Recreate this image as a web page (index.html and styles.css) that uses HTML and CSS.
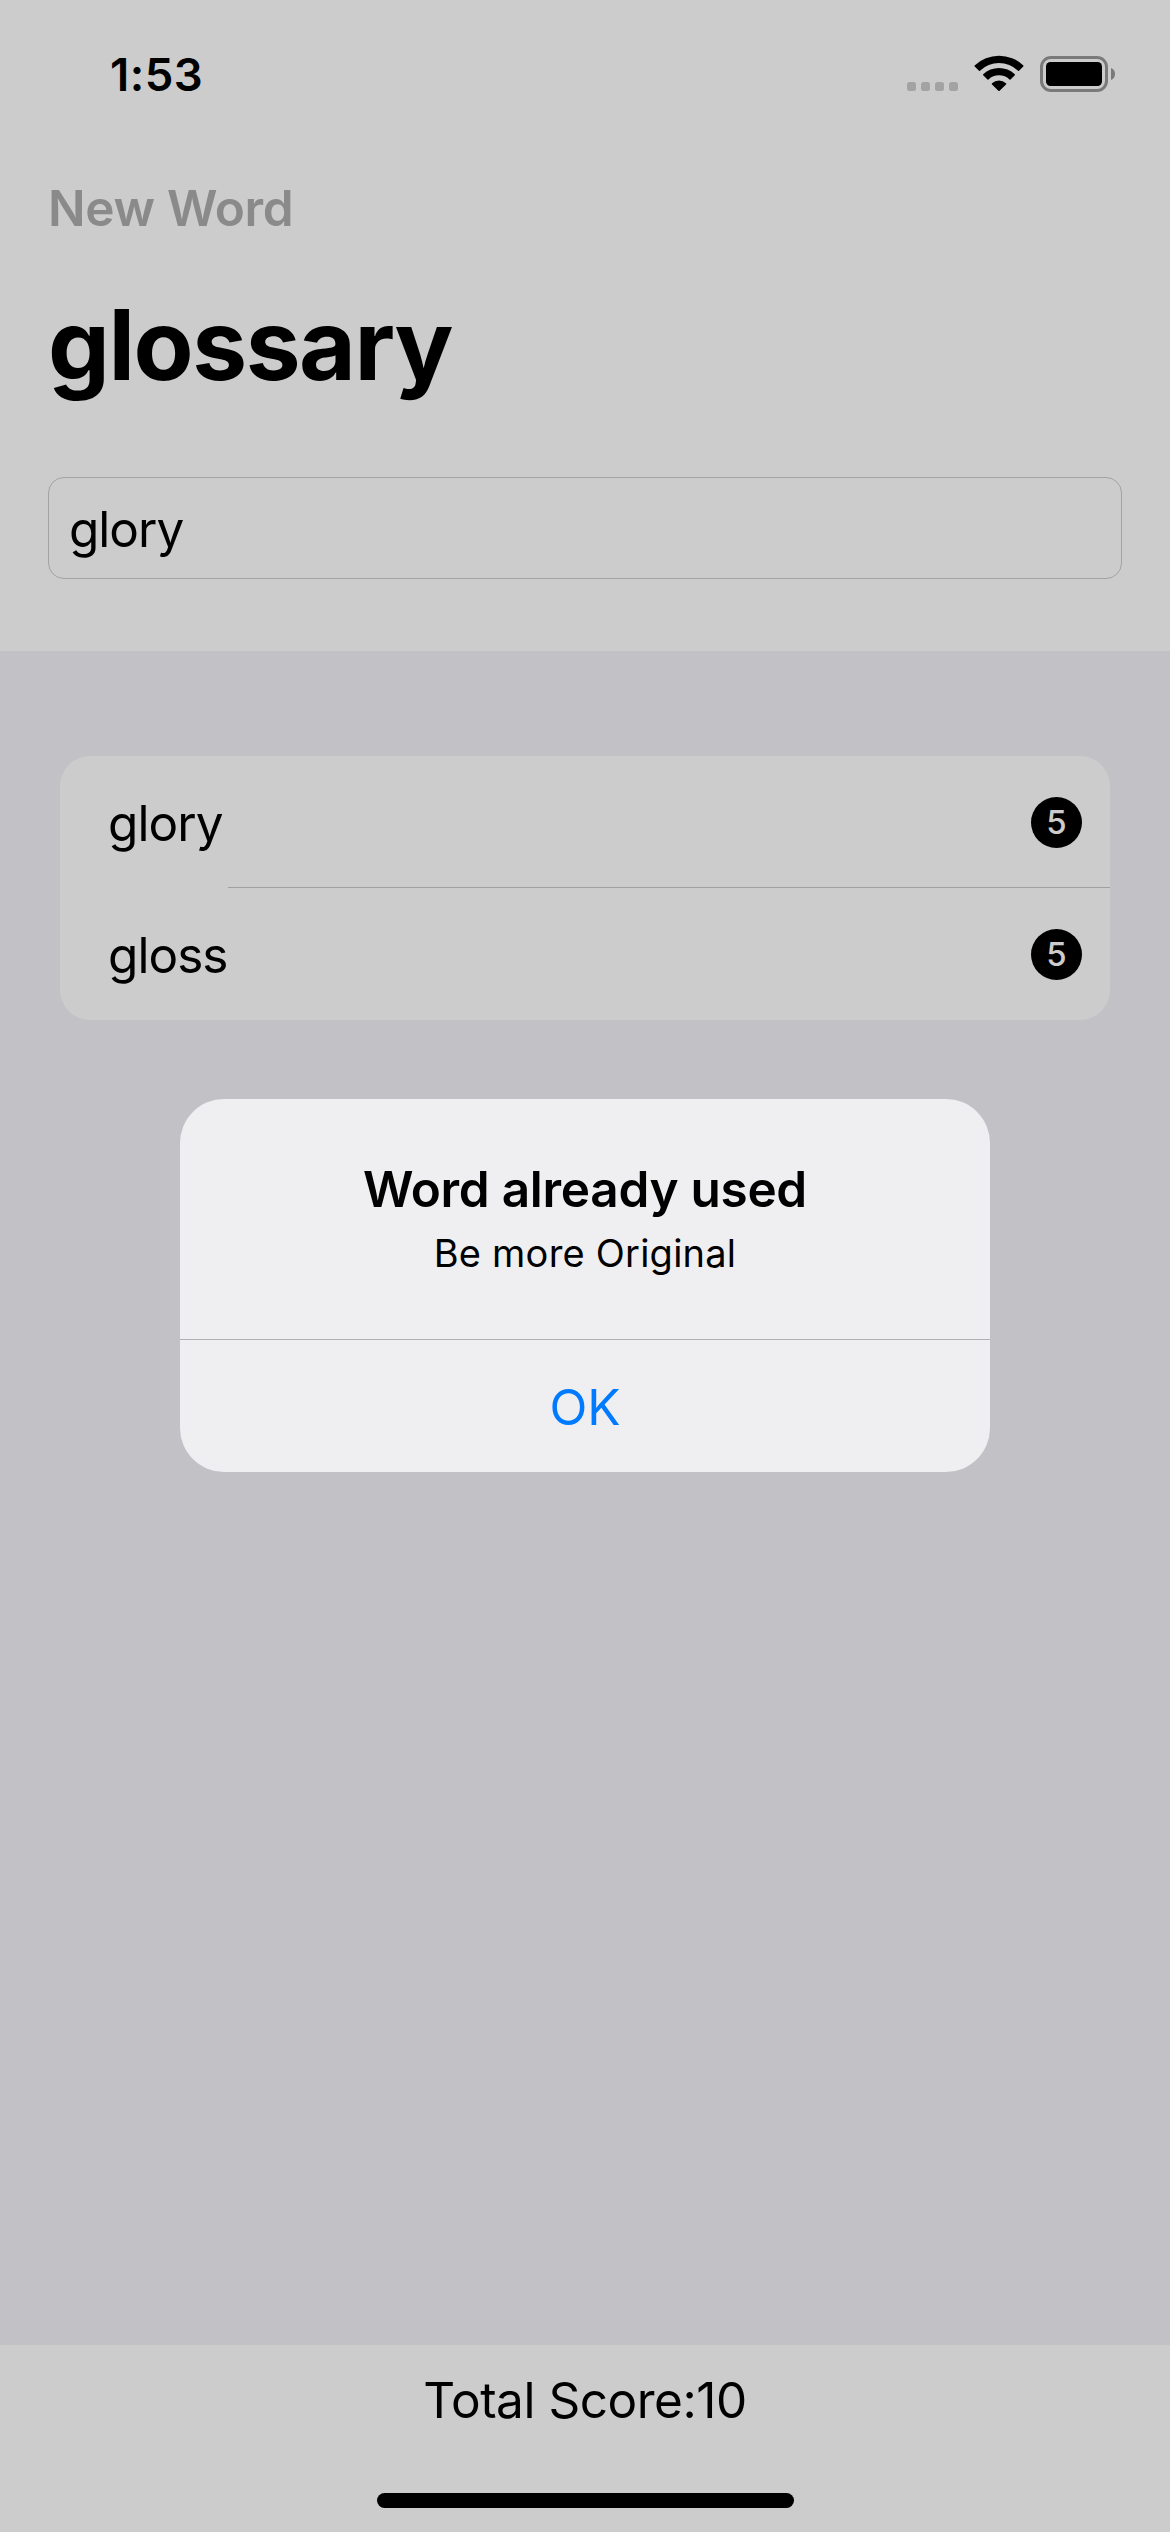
FILE: index.html
```html
<!DOCTYPE html>
<html lang="en">
<head>
<meta charset="utf-8">
<title>glossary</title>
<link rel="stylesheet" href="styles.css">
</head>
<body>
<div class="screen">
  <div class="status-bar">
    <span class="time">1:53</span>
    <div class="status-icons">
      <svg class="cellular" width="52" height="36" viewBox="0 0 52 36"><g fill="#a3a3a3"><rect x="0" y="27" width="9" height="9" rx="2.5"/><rect x="14" y="27" width="9" height="9" rx="2.5"/><rect x="28" y="27" width="9" height="9" rx="2.5"/><rect x="42" y="27" width="9" height="9" rx="2.5"/></g></svg>
      <svg class="wifi" width="50" height="37" viewBox="0 0 50 37"><path d="M.6 10.400A35.500 35.500 0 0 1 49.400 10.400Q49.700 11 49.300 11.500L45 15.700Q44.500 16.100 44 15.700A27.500 27.500 0 0 0 6 15.700Q5.500 16.100 5 15.700L.7 11.500Q.3 11 .6 10.400ZM9.200 19.200A23 23 0 0 1 40.800 19.200Q41.200 19.700 40.800 20.200L36.500 24.500Q36 24.900 35.500 24.500A15.300 15.300 0 0 0 14.500 24.500Q14 24.900 13.500 24.500L9.200 20.200Q8.800 19.700 9.200 19.200ZM18 28.200A10.600 10.600 0 0 1 32 28.200Q32.600 28.800 32 29.400L25.600 35.800Q25 36.300 24.400 35.800L18 29.400Q17.400 28.800 18 28.200Z"/></svg>
      <svg class="battery" width="76" height="36" viewBox="0 0 76 36"><rect x="1.500" y="1.500" width="65" height="33" rx="9.500" fill="none" stroke="#7a7a7a" stroke-width="3"/><rect x="6" y="6" width="56" height="24" rx="4.500"/><path d="M71 12Q75 13.500 75 18T71 24Z" fill="#7a7a7a"/></svg>
    </div>
  </div>
  <header class="header">
    <p class="nav-title">New Word</p>
    <h1 class="root-word">glossary</h1>
    <div class="field">glory</div>
  </header>
  <main class="content">
    <ul class="list">
      <li class="row"><span class="word">glory</span><span class="badge">5</span></li>
      <li class="row"><span class="word">gloss</span><span class="badge">5</span></li>
    </ul>
  </main>
  <footer class="footer">
    <p class="score">Total Score:10</p>
    <div class="home-indicator"></div>
  </footer>
  <div class="alert" role="alertdialog">
    <div class="alert-body">
      <h2 class="alert-title">Word already used</h2>
      <p class="alert-message">Be more Original</p>
    </div>
    <div class="alert-button">OK</div>
  </div>
</div>
</body>
</html>
```
FILE: styles.css
```css
* { box-sizing: border-box; margin: 0; padding: 0; }
body { background: #ccc; }
.screen {
  position: relative;
  display: flex;
  flex-direction: column;
  width: 1170px;
  height: 2532px;
  overflow: hidden;
  background: #ccc;
  color: #000;
  font-family: Inter, "Liberation Sans", sans-serif;
  font-size: 49.5px;
  white-space: nowrap;
}
.status-bar {
  display: flex;
  justify-content: space-between;
  align-items: center;
  height: 148px;
  padding: 0 54px 0 110px;
}
.time { padding-top: 1px; font-size: 45.5px; font-weight: 600; line-height: 60px; letter-spacing: 0.5px; }
.status-icons { display: flex; align-items: center; }
.cellular { margin-top: -2px; }
.wifi { margin: -2px 16px 0 15px; }
.header { height: 503px; padding: 30px 48px 0; }
.nav-title { line-height: 60px; font-weight: 600; letter-spacing: -0.3px; color: #8a8a8a; }
.root-word { margin-top: 47px; font-size: 98px; font-weight: 700; line-height: 120px; letter-spacing: -1.45px; }
.field {
  height: 102px;
  margin-top: 72px;
  padding: 1px 0 0 20px;
  border: 1px solid #a3a3a3;
  border-radius: 16px;
  line-height: 100px;
  letter-spacing: -1px;
}
.content { flex: 1; padding: 105px 60px 0; background: #c2c1c6; }
.list { list-style: none; border-radius: 30px; background: #ccc; }
.row {
  position: relative;
  display: flex;
  align-items: center;
  justify-content: space-between;
  height: 132px;
  padding: 0 28px 0 48px;
}
.row:first-child::after {
  content: "";
  position: absolute;
  left: 168px;
  right: 0;
  bottom: 0;
  height: 1px;
  background: #a0a0a0;
}
.word { padding-top: 2px; letter-spacing: -0.95px; }
.badge {
  display: flex;
  align-items: center;
  justify-content: center;
  width: 51px;
  height: 51px;
  border-radius: 50%;
  background: #000;
  color: #ccc;
  font-size: 33px;
  font-weight: 500;
}
.footer { display: flex; flex-direction: column; align-items: center; height: 187px; padding-top: 25px; }
.score { line-height: 60px; letter-spacing: -0.47px; }
.home-indicator { width: 417px; height: 15px; margin-top: 63px; border-radius: 8px; background: #000; }
.alert {
  position: absolute;
  top: 1099px;
  left: 180px;
  width: 810px;
  height: 373px;
  border-radius: 44px;
  background: #efeff1;
  text-align: center;
}
.alert-body { height: 241px; padding-top: 60px; border-bottom: 1px solid #b0b0b2; }
.alert-title { font-size: 49.5px; font-weight: 600; line-height: 60px; letter-spacing: -0.28px; }
.alert-message { margin-top: 9px; font-size: 38px; line-height: 50px; letter-spacing: 0.22px; }
.alert-button { padding-top: 1px; line-height: 132px; color: #007aff; }
```
